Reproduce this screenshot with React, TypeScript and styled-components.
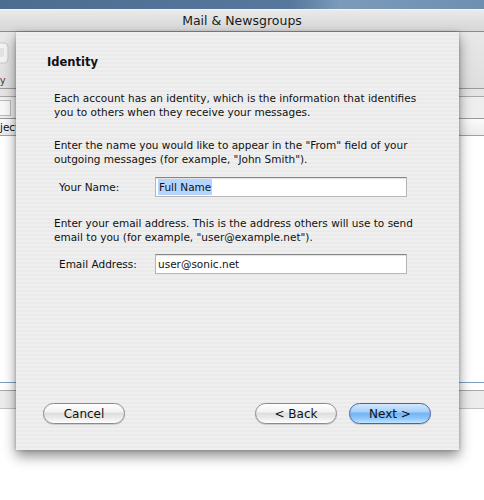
import React from 'react';
import styled, { createGlobalStyle } from 'styled-components';

const GlobalStyle = createGlobalStyle`
  html, body {
    margin: 0;
    padding: 0;
    background: #ffffff;
  }
  body {
    font-family: "DejaVu Sans", "Liberation Sans", sans-serif;
    color: #000;
  }
`;

const Screen = styled.div`
  position: relative;
  width: 484px;
  height: 500px;
  overflow: hidden;
  background: #ffffff;
`;

const Desktop = styled.div`
  height: 9px;
  background: linear-gradient(100deg, #4d6d90 0%, #56789c 60%, #7c9bbb 70%, #6f8fb1 100%);
`;

const Window = styled.div`
  display: flex;
  flex-direction: column;
`;

const TitleBar = styled.div`
  height: 23px;
  box-sizing: border-box;
  border-top: 1px solid #f4f4f4;
  border-bottom: 1px solid #8c8c8c;
  background: linear-gradient(#eaeaea, #d6d6d6);
  display: flex;
  align-items: center;
  justify-content: center;
  font-size: 12.5px;
  color: #1a1a1a;
`;

const Toolbar = styled.div`
  height: 56px;
  border-bottom: 1px solid #9a9a9a;
  background: linear-gradient(#e8e8e8, #dedede);
  display: flex;
  align-items: flex-start;
`;

const ToolItem = styled.div`
  padding-top: 8px;
  display: flex;
  flex-direction: column;
  align-items: flex-start;
  gap: 9px;
  font-size: 10px;
  color: #444;
`;

const ToolIcon = styled.svg`
  margin-left: -16px;
`;

const ToolLabel = styled.span`
  text-indent: -22px;
  white-space: nowrap;
`;

const SearchBand = styled.div`
  height: 29px;
  border-bottom: 1px solid #9a9a9a;
  background: #eeeeee;
  display: flex;
  flex-direction: column;
`;

const BandStrip = styled.div`
  height: 7px;
  border-bottom: 1px solid #a8a8a8;
  background: #e4e4e4;
`;

const SearchField = styled.div`
  margin-top: 3px;
  width: 10px;
  height: 14px;
  background: #f8f8f8;
  border: 1px solid #bbbbbb;
  border-left: none;
`;

const ColumnHeader = styled.div`
  height: 16px;
  border-bottom: 1px solid #8aa4c4;
  background: linear-gradient(#fbfbfb, #ececec);
  display: flex;
  align-items: center;
  font-size: 10.5px;
  color: #111;
`;

const HeaderCell = styled.span`
  text-indent: -20px;
  white-space: nowrap;
`;

const MessageList = styled.div`
  height: 246px;
  background: #ffffff;
`;

const Footer = styled.div`
  border-top: 1px solid #7e9fc2;
  display: flex;
  flex-direction: column;
`;

const FooterGap = styled.div`
  height: 7px;
  background: #ffffff;
  border-bottom: 1px solid #a8a8a8;
`;

const FooterBand = styled.div`
  height: 17px;
  background: #ececec;
  border-bottom: 1px solid #c4c4c4;
`;

const Sheet = styled.div`
  position: absolute;
  left: 16px;
  top: 32px;
  width: 443px;
  height: 418px;
  box-sizing: border-box;
  padding: 22px 28px 26px 31px;
  background: repeating-linear-gradient(
    0deg,
    #efefef 0px,
    #efefef 2px,
    #eaeaea 2px,
    #eaeaea 4px
  );
  box-shadow: 0 6px 12px rgba(0, 0, 0, 0.45), 0 0 3px rgba(0, 0, 0, 0.25);
  display: flex;
  flex-direction: column;
`;

const Heading = styled.div`
  font-weight: bold;
  font-size: 11.5px;
  line-height: 16px;
  color: #111;
`;

const Body = styled.div`
  padding-left: 7px;
  display: flex;
  flex-direction: column;
`;

const Paragraph = styled.p<{ $top: number }>`
  margin: ${(p) => p.$top}px 0 0;
  font-size: 10.5px;
  line-height: 13.5px;
  color: #111;
`;

const FieldRow = styled.div<{ $top: number }>`
  margin-top: ${(p) => p.$top}px;
  padding-left: 5px;
  display: flex;
  align-items: center;
`;

const FieldLabel = styled.label`
  width: 96px;
  font-size: 10.5px;
  color: #111;
`;

const TextBox = styled.div`
  width: 252px;
  height: 20px;
  box-sizing: border-box;
  background: #ffffff;
  border: 1px solid #b6b6b6;
  border-top-color: #858585;
  box-shadow: inset 0 1px 1px rgba(0, 0, 0, 0.12);
  display: flex;
  align-items: center;
  padding-left: 2px;
  font-size: 10.5px;
  color: #111;
`;

const Selected = styled.span`
  background: #b5d5ff;
  padding: 2px 1px;
`;

const Buttons = styled.div`
  margin-top: auto;
  margin-left: -4px;
  display: flex;
  align-items: center;
`;

const Spacer = styled.div`
  flex: 1;
`;

const PillButton = styled.button<{ $primary?: boolean }>`
  width: 82px;
  height: 21px;
  box-sizing: border-box;
  border-radius: 11px;
  font-family: "DejaVu Sans", "Liberation Sans", sans-serif;
  font-size: 12px;
  color: #111;
  padding: 0;
  margin-left: ${(p) => (p.$primary ? '12px' : '0')};
  border: 1px solid ${(p) => (p.$primary ? '#4a62a8' : '#8a8a8a')};
  background: ${(p) =>
    p.$primary
      ? 'linear-gradient(#d2e8fd 0%, #a8d0f8 40%, #74b4f2 50%, #8cc6fb 75%, #c2e4ff 100%)'
      : 'linear-gradient(#ffffff 0%, #f3f3f3 40%, #dedede 50%, #ececec 75%, #ffffff 100%)'};
  box-shadow: 0 1px 1px rgba(0, 0, 0, 0.15);
`;

const App: React.FC = () => {
  return (
    <>
      <GlobalStyle />
      <Screen>
        <Desktop />
        <Window>
          <TitleBar>Mail &amp; Newsgroups</TitleBar>
          <Toolbar>
            <ToolItem>
              <ToolIcon width="26" height="26" viewBox="0 0 26 26">
                <rect x="2" y="3" width="22" height="20" rx="4" fill="#f3f3f3" stroke="#c8c8c8" />
                <rect x="6" y="8" width="14" height="9" rx="2" fill="#e2e2e2" />
              </ToolIcon>
              <ToolLabel>Reply</ToolLabel>
            </ToolItem>
          </Toolbar>
          <SearchBand>
            <BandStrip />
            <SearchField />
          </SearchBand>
          <ColumnHeader>
            <HeaderCell>Subject</HeaderCell>
          </ColumnHeader>
          <MessageList />
          <Footer>
            <FooterGap />
            <FooterBand />
          </Footer>
        </Window>

        <Sheet>
          <Heading>Identity</Heading>
          <Body>
            <Paragraph $top={22}>
              Each account has an identity, which is the information that identifies
              you to others when they receive your messages.
            </Paragraph>
            <Paragraph $top={20}>
              Enter the name you would like to appear in the "From" field of your
              outgoing messages (for example, "John Smith").
            </Paragraph>
            <FieldRow $top={11}>
              <FieldLabel>Your Name:</FieldLabel>
              <TextBox>
                <Selected>Full Name</Selected>
              </TextBox>
            </FieldRow>
            <Paragraph $top={20}>
              Enter your email address. This is the address others will use to send
              email to you (for example, "user@example.net").
            </Paragraph>
            <FieldRow $top={10}>
              <FieldLabel>Email Address:</FieldLabel>
              <TextBox>user@sonic.net</TextBox>
            </FieldRow>
          </Body>
          <Buttons>
            <PillButton>Cancel</PillButton>
            <Spacer />
            <PillButton>&lt; Back</PillButton>
            <PillButton $primary>Next &gt;</PillButton>
          </Buttons>
        </Sheet>
      </Screen>
    </>
  );
};

export default App;
